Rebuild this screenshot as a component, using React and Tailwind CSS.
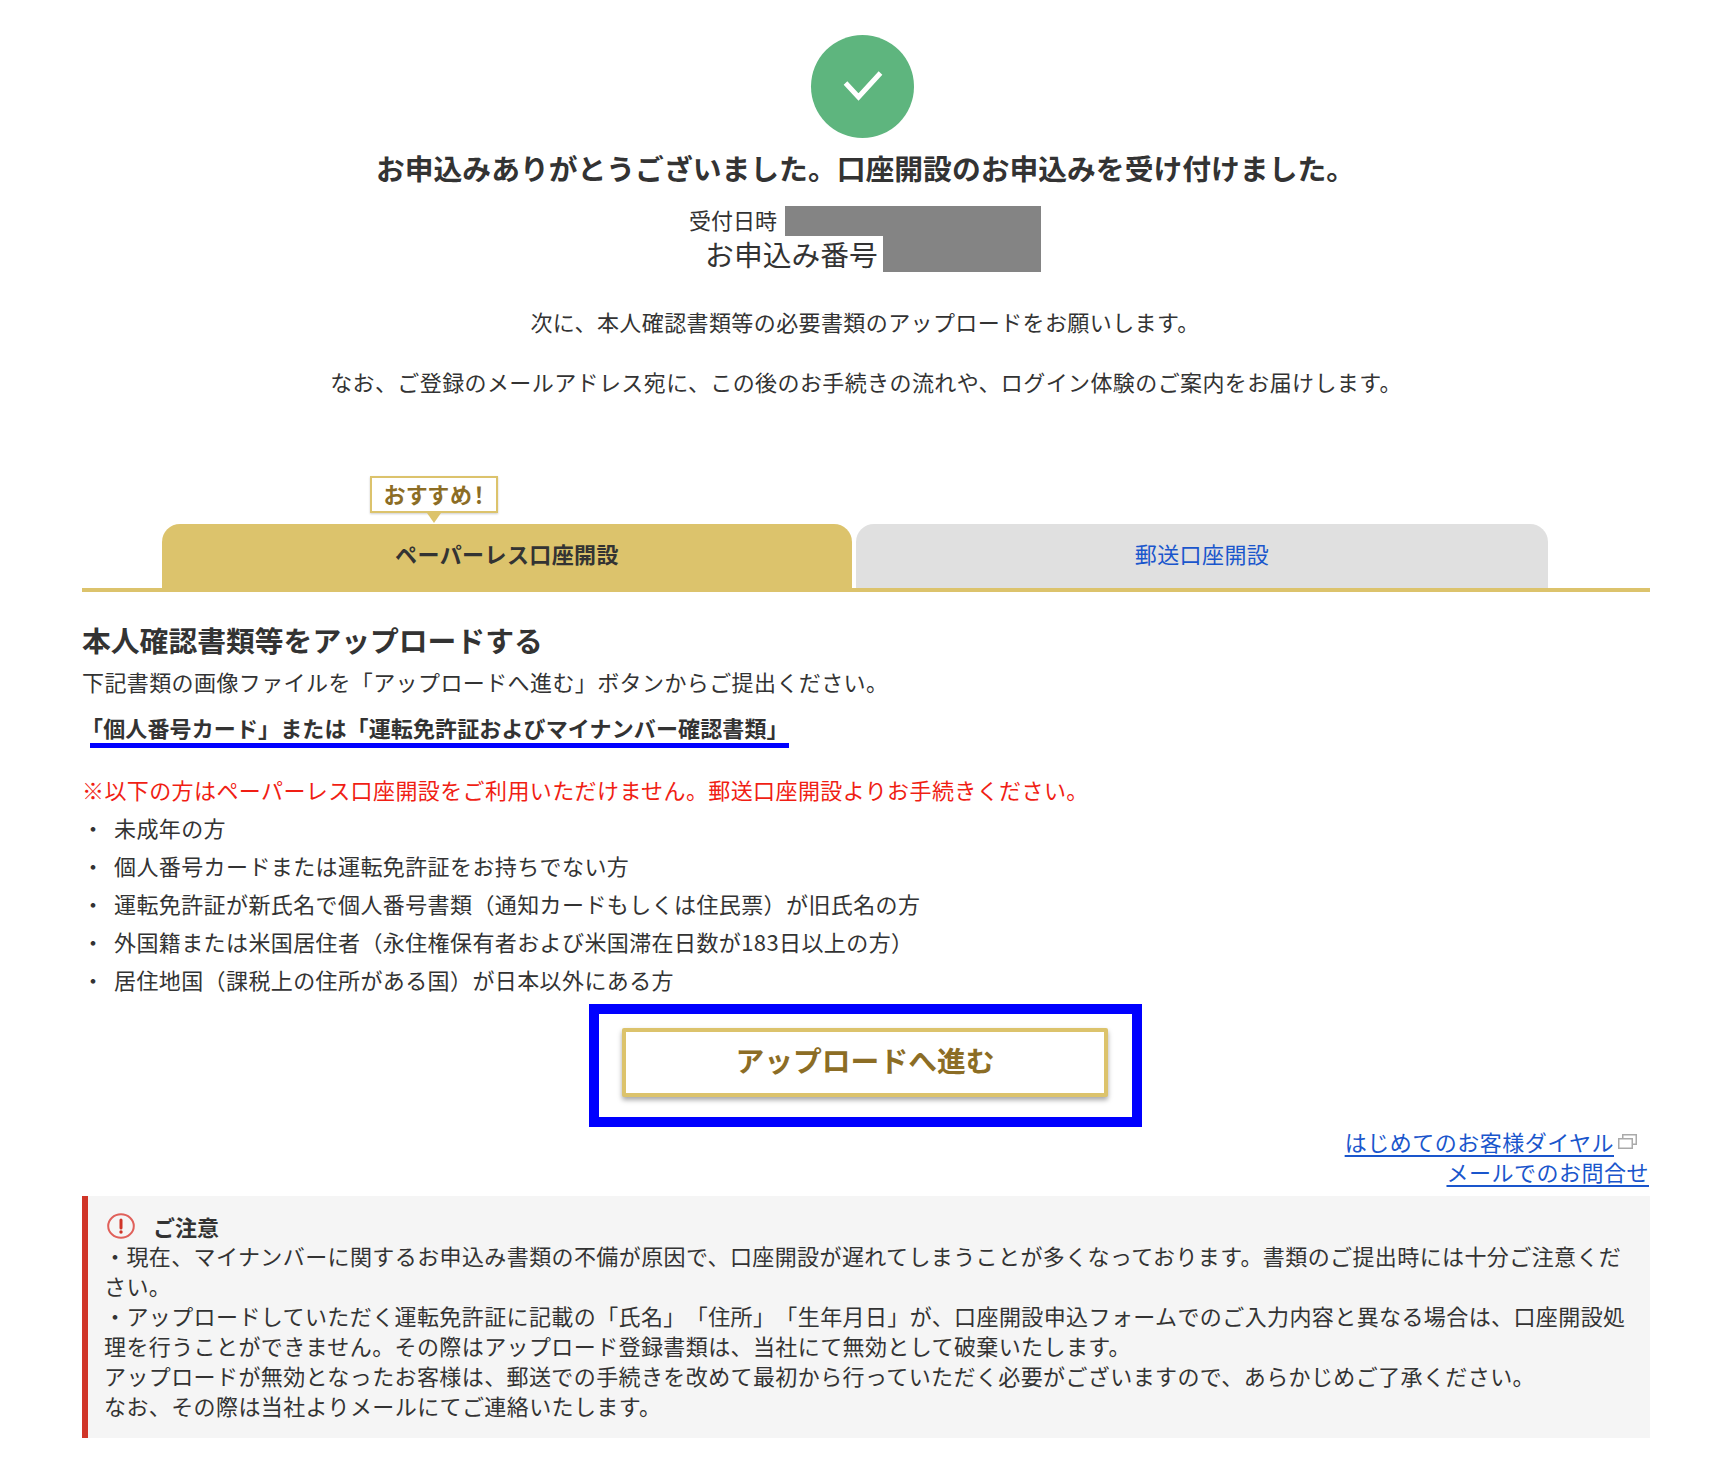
import React from 'react';

const reasons = [
  '未成年の方',
  '個人番号カードまたは運転免許証をお持ちでない方',
  '運転免許証が新氏名で個人番号書類（通知カードもしくは住民票）が旧氏名の方',
  '外国籍または米国居住者（永住権保有者および米国滞在日数が183日以上の方）',
  '居住地国（課税上の住所がある国）が日本以外にある方',
];

const App = () => {
  return (
    <div className="w-[1730px] min-h-[1466px] bg-white pt-[35px] pl-[82px] pr-[80px] text-[22px] leading-[30px] tracking-[0.4px] text-[#333333] [text-spacing-trim:space-all] font-['Noto_Sans_CJK_JP','Noto_Sans',sans-serif]">
      <div className="flex justify-center pr-[8px]">
        <div className="flex h-[103px] w-[103px] items-center justify-center rounded-full bg-[#5eb57e]">
          <svg width="103" height="103" viewBox="0 0 103 103" fill="none">
            <polyline points="34.5,48 47.5,62 69.5,38" stroke="white" strokeWidth="5" />
          </svg>
        </div>
      </div>
      <h1 className="mt-[10px] pr-[1px] text-center text-[28.8px] leading-[40px] font-bold tracking-normal">
        お申込みありがとうございました。口座開設のお申込みを受け付けました。
      </h1>
      <div className="mt-[18px] flex h-[30px] items-start justify-center pr-[2px] tracking-normal">
        <span className="leading-[27px]">受付日時</span>
        <span className="ml-[8px] h-[30px] w-[256px] bg-[#848484]"></span>
      </div>
      <div className="flex h-[36px] justify-center pr-[4px] text-[28.8px] leading-[36px] tracking-normal">
        <span className="ml-[18px]">お申込み番号</span>
        <span className="ml-[5px] h-[36px] w-[158px] bg-[#848484]"></span>
      </div>
      <p className="mt-[34px] pr-[2px] text-center">次に、本人確認書類等の必要書類のアップロードをお願いします。</p>
      <p className="mt-[30px] text-center">なお、ご登録のメールアドレス宛に、この後のお手続きの流れや、ログイン体験のご案内をお届けします。</p>

      <div className="mt-[128px] flex border-b-4 border-[#dcc36c] pl-[80px]">
        <div className="relative flex h-[64px] w-[690px] items-center justify-center rounded-t-[18px] bg-[#dcc36c] pb-[6px] text-[22px] font-bold">
          ペーパーレス口座開設
          <div className="absolute -top-[48px] left-[208px] flex h-[37px] w-[128px] items-center justify-center border-2 border-[#dcc36c] bg-white pb-[4px] pl-[2px] text-[22px] font-bold tracking-[1.8px] text-[#8c6d25] shadow-[0_1px_2px_rgba(0,0,0,0.2)] [font-feature-settings:'palt']">
            おすすめ！
            <span className="absolute -bottom-[12px] left-[55px] h-0 w-0 border-x-[7.5px] border-t-[10px] border-x-transparent border-t-[#dcc36c]"></span>
          </div>
        </div>
        <div className="ml-[4px] flex h-[64px] w-[692px] items-center justify-center rounded-t-[18px] bg-[#e0e0e0] pb-[6px] text-[#1a56cc]">
          郵送口座開設
        </div>
      </div>

      <h2 className="mt-[30px] text-[28.8px] leading-[36px] font-bold tracking-normal">本人確認書類等をアップロードする</h2>
      <p className="mt-[8px]">下記書類の画像ファイルを「アップロードへ進む」ボタンからご提出ください。</p>
      <p className="mt-[16px] ml-[8px] w-fit border-b-[5px] border-[#0000ff] pb-[1px] font-bold tracking-[0.13px] [text-indent:-9px]">
        「個人番号カード」または「運転免許証およびマイナンバー確認書類」
      </p>
      <p className="mt-[26px] text-[#f01e14]">※以下の方はペーパーレス口座開設をご利用いただけません。郵送口座開設よりお手続きください。</p>
      <ul className="mt-[4px]">
        {reasons.map((r) => (
          <li key={r} className="flex h-[38px] items-center">
            <span className="w-[32px]">・</span>
            <span>{r}</span>
          </li>
        ))}
      </ul>

      <div className="mt-[6px] ml-[507px] w-[553px] border-[10px] border-[#0000ff] pt-[14px] pr-[24px] pb-[20px] pl-[23px]">
        <button className="flex h-[69px] w-full items-center justify-center rounded-[2px] border-4 border-[#dcc36c] bg-white pb-[6px] text-[28.8px] font-bold tracking-normal text-[#8c6d25] shadow-[0_3px_5px_rgba(0,0,0,0.35)]">
          アップロードへ進む
        </button>
      </div>

      <div className="-mt-[1px] pr-[1px] text-right tracking-[0.5px] text-[#1a56cc]">
        <div className="flex items-center justify-end">
          <a className="underline underline-offset-[4px]">はじめてのお客様ダイヤル</a>
          <svg className="ml-[4px] mr-[12px]" width="19" height="15" viewBox="0 0 19 15" fill="none" stroke="#aaaaaa" strokeWidth="1.5">
            <rect x="4.75" y="0.75" width="13.5" height="9.5" />
            <rect x="0.75" y="4.75" width="13.5" height="9.5" fill="white" />
          </svg>
        </div>
        <a className="underline underline-offset-[4px]">メールでのお問合せ</a>
      </div>

      <div className="mt-[10px] border-l-[6px] border-[#d03528] bg-[#f5f5f5] pt-[15px] pr-[12px] pb-[18px] pl-[16px]">
        <div className="flex h-[29px] items-center">
          <svg className="ml-[3px] mr-[18px]" width="28" height="26" viewBox="0 0 28 26" fill="none">
            <ellipse cx="14" cy="13" rx="12.8" ry="11.8" stroke="#e0605a" strokeWidth="2" />
            <line x1="14" y1="7" x2="14" y2="15" stroke="#d03528" strokeWidth="3" strokeLinecap="round" />
            <circle cx="14" cy="19" r="1.7" fill="#d03528" />
          </svg>
          <span className="font-bold tracking-normal">ご注意</span>
        </div>
        <p>・現在、マイナンバーに関するお申込み書類の不備が原因で、口座開設が遅れてしまうことが多くなっております。書類のご提出時には十分ご注意ください。</p>
        <p>・アップロードしていただく運転免許証に記載の「氏名」「住所」「生年月日」が、口座開設申込フォームでのご入力内容と異なる場合は、口座開設処理を行うことができません。その際はアップロード登録書類は、当社にて無効として破棄いたします。</p>
        <p>アップロードが無効となったお客様は、郵送での手続きを改めて最初から行っていただく必要がございますので、あらかじめご了承ください。</p>
        <p>なお、その際は当社よりメールにてご連絡いたします。</p>
      </div>
    </div>
  );
};

export default App;
